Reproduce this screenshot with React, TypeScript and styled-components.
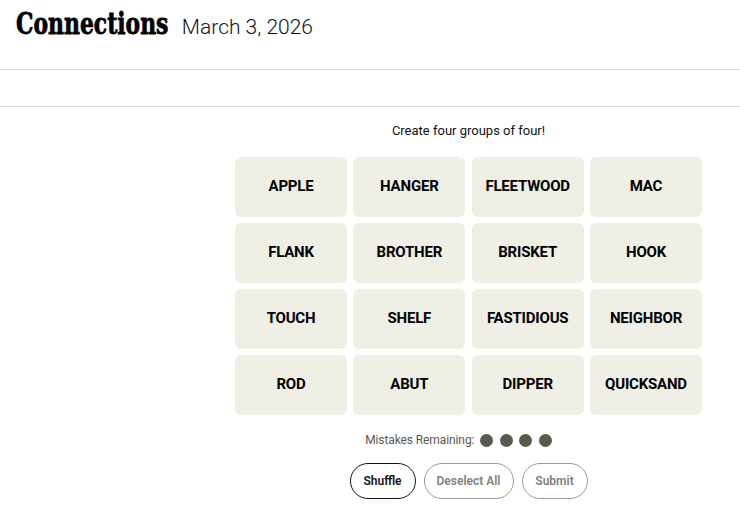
import React from "react";
import styled, { createGlobalStyle } from "styled-components";

const Global = createGlobalStyle`
  html, body { margin: 0; padding: 0; background: #ffffff; }
  body { font-family: Roboto, "Liberation Sans", Arial, sans-serif; color: #000; }
`;

const Header = styled.header`
  height: 70px;
  box-sizing: border-box;
  border-bottom: 1px solid #dcdcdc;
  display: flex;
  align-items: baseline;
  gap: 14px;
  padding: 6px 16px 0;
`;

const Title = styled.h1`
  margin: 0 -57px 0 0;
  display: inline-block;
  font-family: "DejaVu Serif", "Liberation Serif", serif;
  font-weight: 900;
  font-size: 30px;
  line-height: 36px;
  letter-spacing: 0;
  -webkit-text-stroke: 0.8px #000;
  transform: scaleX(0.73);
  transform-origin: left center;
`;

const DateText = styled.span`
  font-family: Roboto, "Liberation Sans", sans-serif;
  font-weight: 300;
  font-size: 21px;
  color: #121212;
`;

const Toolbar = styled.div`
  height: 37px;
  box-sizing: border-box;
  border-bottom: 1px solid #dcdcdc;
`;

const Main = styled.main`
  width: 467px;
  margin-left: 235px;
  display: flex;
  flex-direction: column;
  align-items: center;
`;

const Instruction = styled.p`
  margin: 16px 0 0;
  font-size: 13px;
  line-height: 16px;
  color: #121212;
`;

const Grid = styled.div`
  margin-top: 18px;
  width: 100%;
  display: grid;
  grid-template-columns: repeat(4, 1fr);
  grid-auto-rows: 60px;
  column-gap: 6.33px;
  row-gap: 6px;
`;

const Tile = styled.button`
  border: none;
  border-radius: 6px;
  background: #efefe6;
  display: flex;
  align-items: center;
  justify-content: center;
  font-family: Roboto, "Liberation Sans", sans-serif;
  font-weight: 700;
  font-size: 15px;
  letter-spacing: -0.2px;
  color: #000;
  text-transform: uppercase;
  padding: 0 0 3px;
`;

const Mistakes = styled.div`
  margin-top: 17px;
  display: flex;
  align-items: center;
  gap: 6px;
  font-size: 12px;
  line-height: 16px;
  letter-spacing: -0.1px;
  color: #5a594e;
  margin-right: 20px;
`;

const Dots = styled.div`
  display: flex;
  gap: 6.5px;
`;

const Dot = styled.span`
  width: 13px;
  height: 13px;
  border-radius: 50%;
  background: #5a594e;
`;

const Buttons = styled.div`
  margin-top: 15px;
  display: flex;
  gap: 8px;
`;

const Pill = styled.button<{ $active?: boolean; $w: number }>`
  width: ${(p) => p.$w}px;
  height: 36px;
  border-radius: 18px;
  background: #fff;
  border: 1px solid ${(p) => (p.$active ? "#121212" : "#9a9a9a")};
  color: ${(p) => (p.$active ? "#121212" : "#7f7f7f")};
  font-family: Roboto, "Liberation Sans", sans-serif;
  font-weight: 600;
  font-size: 12px;
  padding: 0;
`;

const words = [
  "APPLE", "HANGER", "FLEETWOOD", "MAC",
  "FLANK", "BROTHER", "BRISKET", "HOOK",
  "TOUCH", "SHELF", "FASTIDIOUS", "NEIGHBOR",
  "ROD", "ABUT", "DIPPER", "QUICKSAND",
];

export default function App() {
  return (
    <>
      <Global />
      <Header>
        <Title>Connections</Title>
        <DateText>March 3, 2026</DateText>
      </Header>
      <Toolbar />
      <Main>
        <Instruction>Create four groups of four!</Instruction>
        <Grid>
          {words.map((w) => (
            <Tile key={w}>{w}</Tile>
          ))}
        </Grid>
        <Mistakes>
          Mistakes Remaining:
          <Dots>
            <Dot />
            <Dot />
            <Dot />
            <Dot />
          </Dots>
        </Mistakes>
        <Buttons>
          <Pill $active $w={66}>Shuffle</Pill>
          <Pill $w={90}>Deselect All</Pill>
          <Pill $w={66}>Submit</Pill>
        </Buttons>
      </Main>
    </>
  );
}
